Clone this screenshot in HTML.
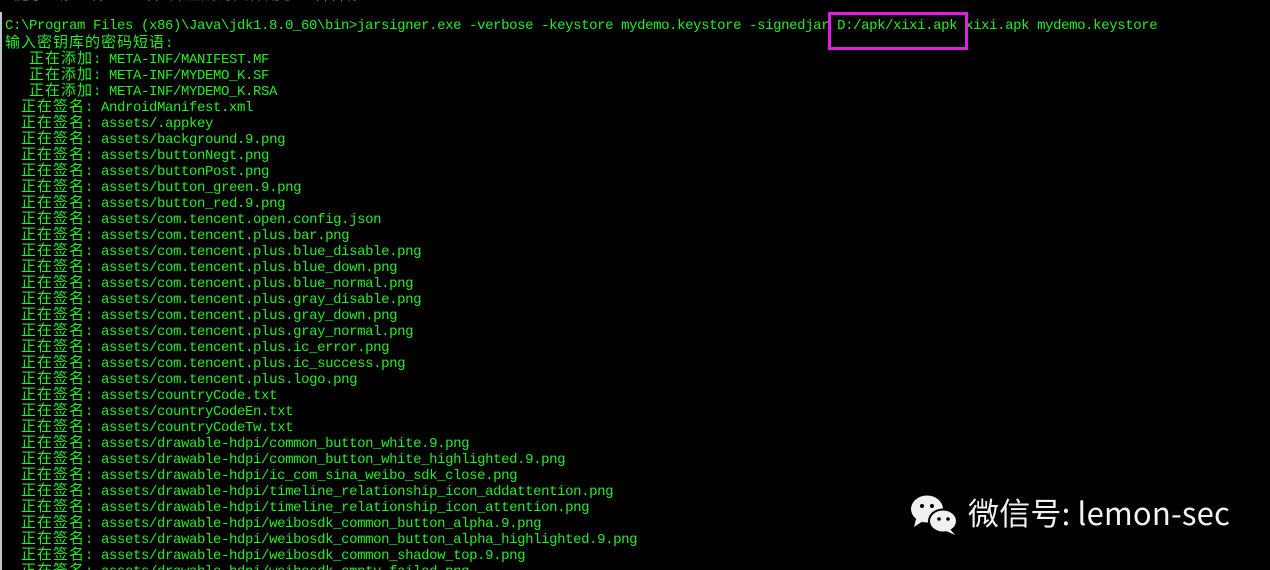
<!DOCTYPE html>
<html><head><meta charset="utf-8"><style>
html,body{margin:0;padding:0;background:#000;width:1270px;height:570px;overflow:hidden;position:relative}
.t{position:absolute;left:5px;top:-14px;font-family:"Liberation Mono","Noto Sans CJK SC",monospace;font-size:14px;letter-spacing:-0.4px;line-height:16px;color:#22ee22}
.t div{height:16px;white-space:pre}
.c{font-family:"Noto Sans CJK SC","WenQuanYi Zen Hei",sans-serif;font-size:15px;letter-spacing:1px}
.edge{position:absolute;left:0;top:12px;width:2px;height:558px;background:#bfc7c7}
.box{position:absolute;left:828px;top:12px;width:134px;height:32px;border:3px solid #e020e0}
.wm{position:absolute;left:968px;top:490px;font-family:"Noto Sans CJK SC",sans-serif;font-size:31px;letter-spacing:0.2px;color:#f2f2f2;line-height:44px}
</style></head><body>
<div class="edge"></div>
<div class="t"><div><span class="c">  提示  请    设置  签名  并生成的文件用于签名名称</span></div><div></div><div>C:\Program Files (x86)\Java\jdk1.8.0_60\bin>jarsigner.exe -verbose -keystore mydemo.keystore -signedjar D:/apk/xixi.apk xixi.apk mydemo.keystore</div><div><span class="c">输入密钥库的密码短语</span>:</div><div>   <span class="c">正在添加</span>: META-INF/MANIFEST.MF</div><div>   <span class="c">正在添加</span>: META-INF/MYDEMO_K.SF</div><div>   <span class="c">正在添加</span>: META-INF/MYDEMO_K.RSA</div><div>  <span class="c">正在签名</span>: AndroidManifest.xml</div><div>  <span class="c">正在签名</span>: assets/.appkey</div><div>  <span class="c">正在签名</span>: assets/background.9.png</div><div>  <span class="c">正在签名</span>: assets/buttonNegt.png</div><div>  <span class="c">正在签名</span>: assets/buttonPost.png</div><div>  <span class="c">正在签名</span>: assets/button_green.9.png</div><div>  <span class="c">正在签名</span>: assets/button_red.9.png</div><div>  <span class="c">正在签名</span>: assets/com.tencent.open.config.json</div><div>  <span class="c">正在签名</span>: assets/com.tencent.plus.bar.png</div><div>  <span class="c">正在签名</span>: assets/com.tencent.plus.blue_disable.png</div><div>  <span class="c">正在签名</span>: assets/com.tencent.plus.blue_down.png</div><div>  <span class="c">正在签名</span>: assets/com.tencent.plus.blue_normal.png</div><div>  <span class="c">正在签名</span>: assets/com.tencent.plus.gray_disable.png</div><div>  <span class="c">正在签名</span>: assets/com.tencent.plus.gray_down.png</div><div>  <span class="c">正在签名</span>: assets/com.tencent.plus.gray_normal.png</div><div>  <span class="c">正在签名</span>: assets/com.tencent.plus.ic_error.png</div><div>  <span class="c">正在签名</span>: assets/com.tencent.plus.ic_success.png</div><div>  <span class="c">正在签名</span>: assets/com.tencent.plus.logo.png</div><div>  <span class="c">正在签名</span>: assets/countryCode.txt</div><div>  <span class="c">正在签名</span>: assets/countryCodeEn.txt</div><div>  <span class="c">正在签名</span>: assets/countryCodeTw.txt</div><div>  <span class="c">正在签名</span>: assets/drawable-hdpi/common_button_white.9.png</div><div>  <span class="c">正在签名</span>: assets/drawable-hdpi/common_button_white_highlighted.9.png</div><div>  <span class="c">正在签名</span>: assets/drawable-hdpi/ic_com_sina_weibo_sdk_close.png</div><div>  <span class="c">正在签名</span>: assets/drawable-hdpi/timeline_relationship_icon_addattention.png</div><div>  <span class="c">正在签名</span>: assets/drawable-hdpi/timeline_relationship_icon_attention.png</div><div>  <span class="c">正在签名</span>: assets/drawable-hdpi/weibosdk_common_button_alpha.9.png</div><div>  <span class="c">正在签名</span>: assets/drawable-hdpi/weibosdk_common_button_alpha_highlighted.9.png</div><div>  <span class="c">正在签名</span>: assets/drawable-hdpi/weibosdk_common_shadow_top.9.png</div><div>  <span class="c">正在签名</span>: assets/drawable-hdpi/weibosdk_empty_failed.png</div></div>
<div class="box"></div>
<svg style="position:absolute;left:910px;top:494px" width="50" height="42" viewBox="0 0 50 42">
<ellipse cx="17" cy="15" rx="16" ry="13.5" fill="#f0f0f0"/>
<path d="M6 25 L4 33 L13 27 Z" fill="#f0f0f0"/>
<ellipse cx="33" cy="27" rx="15" ry="12.5" fill="#000"/>
<ellipse cx="33" cy="27" rx="13" ry="10.5" fill="#f0f0f0"/>
<path d="M40 35 L45 41 L36 37 Z" fill="#f0f0f0"/>
<circle cx="12" cy="12" r="2" fill="#000"/><circle cx="22" cy="12" r="2" fill="#000"/>
<circle cx="29" cy="25" r="1.8" fill="#000"/><circle cx="38" cy="25" r="1.8" fill="#000"/>
</svg>
<div class="wm">微信号: lemon-sec</div>
</body></html>
